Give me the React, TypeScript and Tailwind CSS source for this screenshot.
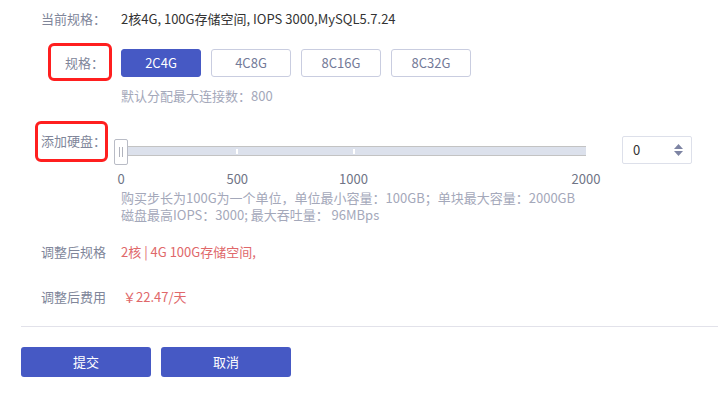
const specs = ['2C4G', '4C8G', '8C16G', '8C32G']

const marks = [
  { value: 0, label: '0' },
  { value: 500, label: '500' },
  { value: 1000, label: '1000' },
  { value: 2000, label: '2000' },
]

const TRACK_W = 465
const MAX = 2000

export default function App() {
  const selected = '2C4G'
  const disk = 0

  return (
    <div
      className="w-[718px] h-[399px] bg-white text-[13px] overflow-hidden"
      style={{ fontFamily: '"Noto Sans CJK SC", "Noto Sans", sans-serif' }}
    >
      <div className="pl-[41px]">
        {/* current spec */}
        <div className="flex items-center h-[38px]">
          <div className="w-[80px] text-[#80869a] whitespace-nowrap">当前规格：</div>
          <div className="text-[#333]">2核4G, 100G存储空间, IOPS 3000,MySQL5.7.24</div>
        </div>

        {/* spec buttons */}
        <div className="flex items-center h-[28px] mt-[11px]">
          <div className="relative w-[80px] h-[28px] flex items-center justify-end pr-[17px] text-[#80869a] whitespace-nowrap">
            规格：
            <div className="absolute left-[7px] -top-[6px] w-[64px] h-[38px] border-[3px] border-[#ff1f1f] rounded-[6px]" />
          </div>
          <div className="flex gap-[10px]">
            {specs.map(s => (
              <button
                key={s}
                className={`w-[80px] h-[28px] rounded-[3px] border text-[13px] ${
                  s === selected
                    ? 'bg-[#4659c4] border-[#4659c4] text-white'
                    : 'bg-white border-[#c9cde0] text-[#737a98]'
                }`}
              >
                {s}
              </button>
            ))}
          </div>
        </div>
        <div className="ml-[80px] mt-[10px] leading-[18px] text-[#a4a8ba]">默认分配最大连接数：800</div>

        {/* disk slider */}
        <div className="flex items-start mt-[32px] h-[28px]">
          <div className="relative w-[80px] h-[28px]">
            <div className="-mt-[5px] -ml-[4px] leading-[18px] pr-[15px] text-right text-[#80869a] whitespace-nowrap">添加硬盘：</div>
            <div className="absolute -left-[6px] -top-[16px] w-[73px] h-[41px] border-[3px] border-[#ff1f1f] rounded-[6px]" />
          </div>
          <div className="relative w-[465px] h-[28px] flex items-center">
            <div className="relative w-full h-[10px] bg-[#dce1ec] border-y border-[#c3c3c3]">
              {[500, 1000].map(v => (
                <div
                  key={v}
                  className="absolute top-[2px] w-[2px] h-[5px] bg-white"
                  style={{ left: (v / MAX) * TRACK_W - 1 }}
                />
              ))}
            </div>
            <div
              className="absolute top-[2px] w-[14px] h-[26px] bg-white border border-[#b9bcc6] rounded-[2px] flex items-center justify-center gap-[2px]"
              style={{ left: (disk / MAX) * TRACK_W - 7 }}
            >
              <div className="w-px h-[10px] bg-[#b0b3bd]" />
              <div className="w-px h-[10px] bg-[#b0b3bd]" />
            </div>
          </div>
          <div className="ml-[36px] -mt-[1px] w-[70px] h-[28px] border border-[#dde0ea] rounded-[2px] flex items-center justify-between pl-[10px] pr-[8px]">
            <span className="text-[#333]">{disk}</span>
            <span className="flex flex-col items-center gap-[2px]">
              <svg width="9" height="5" viewBox="0 0 9 5">
                <path d="M4.5 0 L9 5 L0 5 Z" fill="#7d84a3" />
              </svg>
              <svg width="9" height="5" viewBox="0 0 9 5">
                <path d="M0 0 L9 0 L4.5 5 Z" fill="#7d84a3" />
              </svg>
            </span>
          </div>
        </div>

        {/* marks */}
        <div className="relative ml-[80px] w-[465px] h-[18px] mt-[5px] leading-[18px] text-[#6f7486]">
          {marks.map(m => (
            <span
              key={m.value}
              className="absolute top-0 -translate-x-1/2"
              style={{ left: (m.value / MAX) * TRACK_W }}
            >
              {m.label}
            </span>
          ))}
        </div>
        <div className="ml-[80px] mt-[1px] leading-[17px] text-[#a4a8ba]">
          <div>购买步长为100G为一个单位，单位最小容量：100GB；单块最大容量：2000GB</div>
          <div>磁盘最高IOPS：3000; 最大吞吐量： 96MBps</div>
        </div>

        {/* result */}
        <div className="flex items-center mt-[20px] leading-[18px]">
          <div className="w-[80px] text-[#80869a]">调整后规格</div>
          <div className="text-[#e0686a]">2核 | 4G 100G存储空间,</div>
        </div>
        <div className="flex items-center mt-[27px] leading-[18px]">
          <div className="w-[80px] text-[#80869a]">调整后费用</div>
          <div className="text-[#e0686a] pl-[2px]">￥22.47/天</div>
        </div>
      </div>

      <div className="ml-[21px] mt-[20px] border-t border-[#e2e2ea]" />

      <div className="flex gap-[10px] ml-[21px] mt-[20px]">
        <button className="w-[130px] h-[30px] rounded-[3px] bg-[#4659c4] text-white text-[13px]">提交</button>
        <button className="w-[130px] h-[30px] rounded-[3px] bg-[#4659c4] text-white text-[13px]">取消</button>
      </div>
    </div>
  )
}
